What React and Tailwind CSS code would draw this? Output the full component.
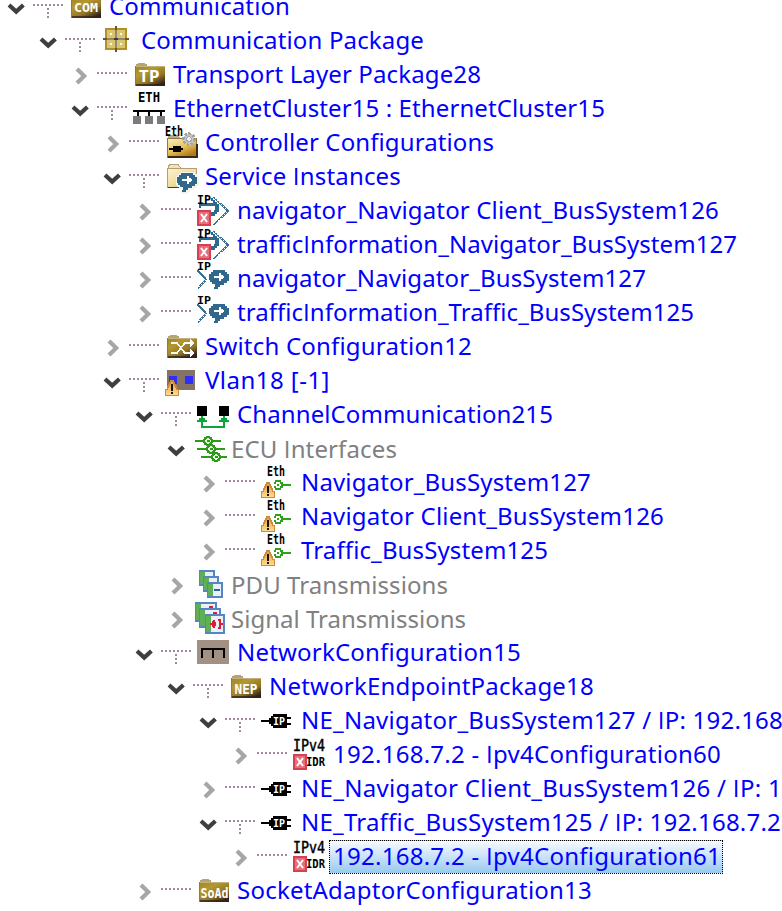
import React, { useLayoutEffect, useRef } from "react";

const MONO = '"DejaVu Sans Mono", "Liberation Mono", monospace';

function Label({ x, y, w, size, fill = "#000", children }) {
  return (
    <text x={x} y={y} textLength={w} lengthAdjust="spacingAndGlyphs" fontSize={size} fontWeight="700" fontFamily={MONO} fill={fill}>
      {children}
    </text>
  );
}

function Defs() {
  return (
    <svg className="absolute h-0 w-0" aria-hidden="true">
      <defs>
        <linearGradient id="gold" x1="0" y1="0" x2="0.75" y2="1">
          <stop offset="0" stopColor="#a08420" />
          <stop offset="0.35" stopColor="#b59830" />
          <stop offset="0.7" stopColor="#937626" />
          <stop offset="1" stopColor="#33221c" />
        </linearGradient>
        <linearGradient id="cream" x1="0" y1="0" x2="0.8" y2="1">
          <stop offset="0" stopColor="#fdf3cf" />
          <stop offset="0.6" stopColor="#f1dc9c" />
          <stop offset="1" stopColor="#d3b26a" />
        </linearGradient>
        <linearGradient id="amber" x1="0" y1="0" x2="0.6" y2="1">
          <stop offset="0" stopColor="#fbeec0" />
          <stop offset="0.55" stopColor="#eac45e" />
          <stop offset="1" stopColor="#b07a18" />
        </linearGradient>
        <linearGradient id="warn" x1="0" y1="0" x2="0" y2="1">
          <stop offset="0" stopColor="#e0a24e" />
          <stop offset="1" stopColor="#ffdc8c" />
        </linearGradient>
      </defs>
    </svg>
  );
}

function GoldFolder({ children }) {
  return (
    <g>
      <path d="M5 8V6H7V4.7H14V6H16V8Z" fill="#b5a477" />
      <rect x="4" y="8" width="30" height="20" fill="url(#gold)" />
      <path d="M4 8.7H34" stroke="#c3b27c" strokeWidth="1.4" />
      <path d="M4.6 8V28" stroke="#8d7c4a" strokeWidth="1.2" />
      <path d="M5 27.2H34" stroke="#33221c" strokeWidth="1.6" opacity="0.75" />
      {children}
    </g>
  );
}

function RedX() {
  return (
    <g>
      <rect x="2" y="16" width="14" height="16" fill="#d93f50" />
      <rect x="4" y="18" width="10" height="12" fill="#e2707d" />
      <path
        d="M6 20L12 28M12 20L6 28"
        stroke="#fff"
        strokeWidth="2"
        shapeRendering="auto"
      />
    </g>
  );
}

function Warning() {
  return (
    <g>
      <path d="M7 16H11V18H12V20H13V22H14V25H16V32H2V25H4V22H5V20H6V18H7Z" fill="#cd8a3a" />
      <path d="M8 18H10V20H11V22H12V24H13V26H15V31H3V26H5V24H6V22H7V20H8Z" fill="url(#warn)" />
      <path d="M8 20H10V27H8ZM8 28H10V30H8Z" fill="#1e1206" />
    </g>
  );
}

function BubbleShape({ stroke }) {
  return (
    <path
      d="M4 0H16V2H18V4H20V11H18V13H15V15H11V17H9V19H5V17H6V14H3V12H1V10H0V4H2V2H4Z"
      fill="#2f688c"
      stroke={stroke}
      strokeWidth={stroke ? 3 : 0}
    />
  );
}

function Bubble({ x, y, halo }) {
  return (
    <g transform={`translate(${x} ${y})`}>
      {halo && <BubbleShape stroke="#f7f3e6" />}
      <BubbleShape />
      <path d="M5 6H10V3H12V5H14V6H15V8H14V9H12V11H10V8H5Z" fill="#fff" />
    </g>
  );
}

function Page({ x, y, w, h, children }) {
  return (
    <g transform={`translate(${x} ${y})`}>
      <rect x="0" y="0" width={w} height={h} fill="#5686c2" />
      <rect x="2" y="2" width={w - 4} height={h - 4} fill="#eaf0fa" />
      <rect x="1" y="2" width="5" height={h - 4} fill="#5fb054" />
      {children}
    </g>
  );
}

const ICONS = {
  com: (
    <GoldFolder>
      <Label x="7" y="22.2" w="24" size="11.5" fill="#fff">COM</Label>
    </GoldFolder>
  ),
  pkg: (
    <g>
      <rect x="6" y="4" width="22" height="22" fill="#b1902b" />
      <rect x="8" y="6" width="18" height="18" fill="#d8c56e" />
      <path d="M17 2V28M4 15H30" stroke="#6d5720" strokeWidth="2" />
      <path d="M17 6V24M8 15H26" stroke="#8c8878" strokeWidth="2" />
      <path d="M15 15H19" stroke="#4c3b10" strokeWidth="2" />
      <path d="M11 10H13M21 10H23M11 20H13M21 20H23" stroke="#fffbe6" strokeWidth="2" />
    </g>
  ),
  tp: (
    <GoldFolder>
      <Label x="7.5" y="24" w="21" size="15.5" fill="#fff">TP</Label>
    </GoldFolder>
  ),
  ethCluster: (
    <g>
      <Label x="7" y="10" w="22" size="13.5">ETH</Label>
      <path d="M2 19H34M7 19V24M18 19V24M30 19V24" stroke="#000" strokeWidth="2" />
      <path d="M2 24h8v8h-8zM14 24h8v8h-8zM26 24h8v8h-8z" fill="#7b7b7b" />
    </g>
  ),
  controller: (
    <g>
      <path d="M5 14V10L7 8.5H14L17 12V14Z" fill="#b8ab86" />
      <rect x="4.6" y="12.6" width="28.8" height="18.4" fill="url(#amber)" stroke="#8a7a52" strokeWidth="1.2" />
      <path d="M5 31H34V18" fill="none" stroke="#3a2a18" strokeWidth="1.8" />
      <path d="M6 22H10V20H18V22H20V24H18V26H10V24H6Z" fill="#000" />
      <circle cx="26" cy="13.2" r="5.6" fill="#c4c4c4" stroke="#a2a2a2" strokeWidth="2.4" strokeDasharray="2.6 1.6" />
      <circle cx="26" cy="13.2" r="2.4" fill="#eef2f5" stroke="#a5a5a5" strokeWidth="1" />
      <Label x="2" y="10" w="18" size="13.5">Eth</Label>
    </g>
  ),
  service: (
    <g>
      <path d="M5 9.5V6.5L7 4.7H15L18 8V10Z" fill="#f2e3b4" stroke="#b7a37a" strokeWidth="1" />
      <rect x="4.6" y="8.2" width="28.8" height="19.2" fill="url(#cream)" stroke="#b39e78" strokeWidth="1.2" />
      <path d="M5 27.6H33" stroke="#4a3a2a" strokeWidth="1.2" />
      <Bubble x={14} y={13} halo />
    </g>
  ),
  client: (
    <g>
      <path d="M4 11V9H18V7H16V4H18V6H20V8H22V10H24V18H22V20H20V22H15V18H19V16H20V12H6V14H4Z" fill="#2f688c" />
      <path d="M18.5 3L33 17L18.5 31" fill="none" stroke="#3b6f92" strokeWidth="1.8" strokeDasharray="2.3 0.5" />
      <Label x="2" y="9.8" w="14" size="13">IP</Label>
      <RedX />
    </g>
  ),
  server: (
    <g>
      <path d="M2.5 8.5L11.2 17.5L2.5 27" fill="none" stroke="#3b6f92" strokeWidth="1.8" strokeDasharray="2.3 0.5" />
      <Bubble x={14} y={8} />
      <Label x="2" y="8" w="14" size="11">IP</Label>
    </g>
  ),
  switch: (
    <GoldFolder>
      <path d="M8 13H14L22 23H30M8 23H14L22 13H30M27 10L30.2 13L27 16M27 20L30.2 23L27 26" fill="none" stroke="#fff" strokeWidth="1.7" />
    </GoldFolder>
  ),
  vlan: (
    <g>
      <rect x="4" y="6" width="28" height="20" fill="#857364" />
      <path d="M6 12h8v8h-8zM22 12h8v8h-8z" fill="#2f2ffc" />
      <Warning />
    </g>
  ),
  channel: (
    <g>
      <path d="M2 8h10v10h-10zM24 8h10v10h-10z" fill="#000" />
      <path d="M7 22V29H29V22" fill="none" stroke="#0ca638" strokeWidth="2" />
      <path d="M6 18H8V20H10V22H12V24H2V22H4V20H6ZM28 18H30V20H32V22H34V24H24V22H26V20H28Z" fill="#0ca638" />
    </g>
  ),
  ecu: (
    <g stroke="#2c9c18" strokeWidth="2" fill="#e9f6e4">
      <path d="M2 9H28M4 17H32M8 25H34" />
      <circle cx="15" cy="9" r="3.8" strokeWidth="2.4" />
      <circle cx="18" cy="17" r="3.8" strokeWidth="2.4" />
      <circle cx="23" cy="25" r="3.8" strokeWidth="2.4" />
      <path d="M14 9H17M17 17H20M22 25H25" strokeWidth="1.6" />
    </g>
  ),
  eth: (
    <g>
      <Label x="8" y="10" w="18" size="13.5">Eth</Label>
      <path d="M15 16H16V14H22V16H24V18H32V20H24V22H22V24H16V22H15V20H17V22H21V20H22V18H21V16H17V18H15Z" fill="#2fa01c" />
      <path d="M18 18H20V20H18Z" fill="#2fa01c" />
      <Warning />
    </g>
  ),
  pdu: (
    <g>
      <Page x={6} y={2} w={16} h={16} />
      <Page x={10} y={8} w={16} h={16} />
      <Page x={14} y={14} w={16} h={16}>
        <path d="M7 8H13" stroke="#2c62a8" strokeWidth="2" />
      </Page>
    </g>
  ),
  signal: (
    <g>
      <Page x={2} y={0} w={22} h={20}>
        <path d="M14 5H18" stroke="#dc1f36" strokeWidth="2" />
      </Page>
      <Page x={6} y={6} w={22} h={20}>
        <path d="M14 5H18" stroke="#dc1f36" strokeWidth="2" />
      </Page>
      <Page x={12} y={12} w={20} h={20}>
        <path d="M5 9H7V7H8V6H10V8H11V12H10V14H8V13H7V11H5ZM13 5H16V9H18V11H16V15H13V13H14V7H13Z" fill="#dc1f36" />
      </Page>
    </g>
  ),
  netconf: (
    <g>
      <rect x="2" y="4" width="32" height="24" fill="#a29183" />
      <path d="M7 22V13H29V22M18 13V22" fill="none" stroke="#000" strokeWidth="2" />
    </g>
  ),
  nep: (
    <GoldFolder>
      <Label x="7.5" y="24" w="23" size="13.5" fill="#fff">NEP</Label>
    </GoldFolder>
  ),
  plug: (
    <g>
      <path d="M2 17H11M27 14H32M27 20H32" stroke="#000" strokeWidth="2" />
      <path d="M14 10H28V24H14V22H12V20H10V14H12V12H14Z" fill="#000" />
      <Label x="14" y="21" w="12" size="11" fill="#fff">IP</Label>
    </g>
  ),
  ipv4: (
    <g>
      <text x="2" y="12.6" textLength="32" lengthAdjust="spacingAndGlyphs" fontSize="16" fontFamily={MONO} fill="#000" stroke="#000" strokeWidth="0.5">
        IPv4
      </text>
      <Label x="15" y="28" w="19" size="13">IDR</Label>
      <RedX />
    </g>
  ),
  soad: (
    <GoldFolder>
      <Label x="5.5" y="24" w="28" size="13.5" fill="#fff">SoAd</Label>
    </GoldFolder>
  ),
};

// [depth, expanded, icon, text, text width in px, kind]
const ROWS = [
  [0, true, "com", "Communication", 181],
  [1, true, "pkg", "Communication Package", 283],
  [2, false, "tp", "Transport Layer Package28", 308],
  [2, true, "ethCluster", "EthernetCluster15 : EthernetCluster15", 432],
  [3, false, "controller", "Controller Configurations", 289],
  [3, true, "service", "Service Instances", 196],
  [4, false, "client", "navigator_Navigator Client_BusSystem126", 482],
  [4, false, "client", "trafficInformation_Navigator_BusSystem127", 500],
  [4, false, "server", "navigator_Navigator_BusSystem127", 409],
  [4, false, "server", "trafficInformation_Traffic_BusSystem125", 457],
  [3, false, "switch", "Switch Configuration12", 267],
  [3, true, "vlan", "Vlan18 [-1]", 125],
  [4, true, "channel", "ChannelCommunication215", 316],
  [5, true, "ecu", "ECU Interfaces", 166, "group"],
  [6, false, "eth", "Navigator_BusSystem127", 290],
  [6, false, "eth", "Navigator Client_BusSystem126", 363],
  [6, false, "eth", "Traffic_BusSystem125", 247],
  [5, false, "pdu", "PDU Transmissions", 217, "group"],
  [5, false, "signal", "Signal Transmissions", 235, "group"],
  [4, true, "netconf", "NetworkConfiguration15", 284],
  [5, true, "nep", "NetworkEndpointPackage18", 325],
  [6, true, "plug", "NE_Navigator_BusSystem127 / IP: 192.168", 482],
  [7, false, "ipv4", "192.168.7.2 - Ipv4Configuration60", 388],
  [6, false, "plug", "NE_Navigator Client_BusSystem126 / IP: 1", 481],
  [6, true, "plug", "NE_Traffic_BusSystem125 / IP: 192.168.7.2", 480],
  [7, false, "ipv4", "192.168.7.2 - Ipv4Configuration61", 388, "selected"],
  [4, false, "soad", "SocketAdaptorConfiguration13", 355],
];

function FitText({ width, children }) {
  const ref = useRef(null);
  useLayoutEffect(() => {
    const el = ref.current;
    el.style.letterSpacing = "0px";
    const natural = el.getBoundingClientRect().width;
    el.style.letterSpacing = `${(width - natural) / children.length}px`;
  }, [width, children]);
  return (
    <span ref={ref} className="inline-block whitespace-pre">
      {children.split(/(I)/).map((part, i) =>
        part === "I" ? (
          <span key={i} className="font-['Open_Sans',sans-serif] leading-none">I</span>
        ) : (
          part
        ),
      )}
    </span>
  );
}

function Chevron({ open }) {
  return (
    <svg className="h-[34px] w-[33px] shrink-0" viewBox="0 0 33 34" fill="none" strokeWidth="4.2">
      {open ? (
        <path d="M9 15L16.2 21.6L23.4 15" stroke="#3f3f3f" />
      ) : (
        <path d="M13 11L20.2 18L13 25" stroke="#a6a6a6" />
      )}
    </svg>
  );
}

function Connector({ open }) {
  return (
    <svg className="h-[34px] w-[34px] shrink-0" viewBox="0 0 34 34" stroke="#a088a0" strokeWidth="2">
      <path d="M0 15H31" strokeDasharray="2 2" />
      {open && <path d="M15 18V30" strokeDasharray="2 2" />}
    </svg>
  );
}

function Row({ depth, open, icon, text, width, kind }) {
  const tone = kind === "group" ? "text-[#808080] pt-px -ml-[2px]" : "pl-[2px] text-[#0000ff]";
  return (
    <div className="flex h-[34px] shrink-0 items-start" style={{ paddingLeft: depth * 32 }}>
      <Chevron open={open} />
      {kind !== "group" && <Connector open={open} />}
      <svg className="h-[34px] w-10 shrink-0 overflow-visible" viewBox="0 0 40 34" shapeRendering="crispEdges">
        {ICONS[icon]}
      </svg>
      {kind === "selected" ? (
        <div className="-ml-[2px] h-[34px] shrink-0 border border-dotted border-black bg-linear-to-b from-[#f7fbff] to-[#99c9ef] pr-px pl-[3px] leading-[30px] text-[#0000ff]">
          <FitText width={width}>{text}</FitText>
        </div>
      ) : (
        <div className={`shrink-0 leading-[32px] ${tone}`}>
          <FitText width={width}>{text}</FitText>
        </div>
      )}
    </div>
  );
}

export default function App() {
  return (
    <div className="relative h-[911px] w-[782px] overflow-hidden bg-white font-['Noto_Sans','Open_Sans',sans-serif] text-[24px]">
      <Defs />
      <div className="-mt-[10px] flex flex-col">
        {ROWS.map(([depth, open, icon, text, width, kind], i) => (
          <Row key={i} depth={depth} open={open} icon={icon} text={text} width={width} kind={kind} />
        ))}
      </div>
    </div>
  );
}
